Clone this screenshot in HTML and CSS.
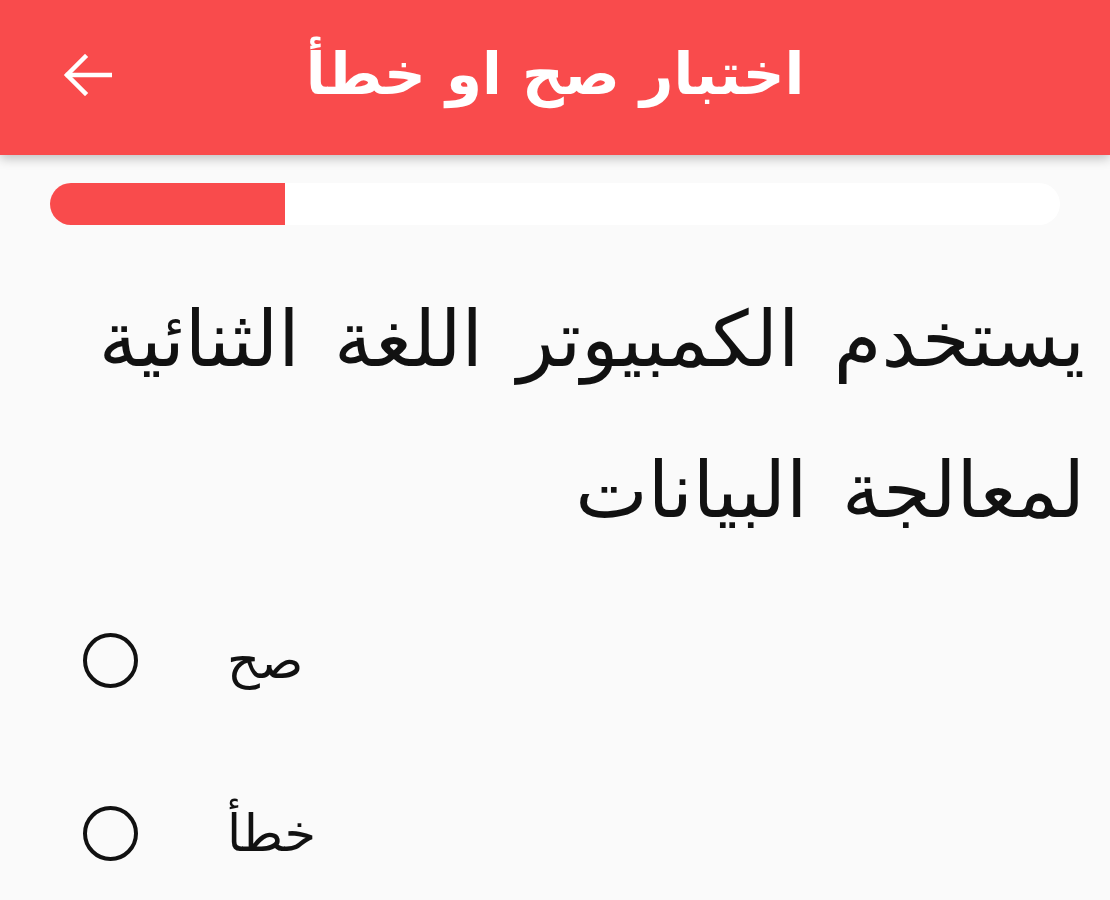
FILE: index.html
```html
<!DOCTYPE html>
<html lang="ar">
<head>
<meta charset="utf-8">
<link rel="stylesheet" href="styles.css">
</head>
<body>
<header class="appbar">
  <svg class="back" width="50" height="42" viewBox="0 0 50 42" fill="none" stroke="#fff" stroke-width="4.5" stroke-linecap="square">
    <path d="M48 21H6"/>
    <path d="M23 3L5 21l18 18"/>
  </svg>
  <h1 class="title">اختبار صح او خطأ</h1>
  <div class="spacer"></div>
</header>
<main class="content">
  <div class="progress"><div class="fill" style="width:23.3%"></div></div>
  <p class="question">يستخدم الكمبيوتر اللغة الثنائية<br>لمعالجة البيانات</p>
  <ul class="options">
    <li class="option"><span class="radio"></span><span class="label">صح</span></li>
    <li class="option"><span class="radio"></span><span class="label">خطأ</span></li>
  </ul>
</main>
</body>
</html>
```
FILE: styles.css
```css
html, body {
  margin: 0;
  padding: 0;
  background: #fafafa;
  font-family: "DejaVu Sans", sans-serif;
}
.appbar {
  height: 155px;
  background: #f94b4c;
  display: flex;
  align-items: center;
  padding: 0 62px;
  box-shadow: 0 4px 10px rgba(0,0,0,0.22);
  position: relative;
  z-index: 1;
}
.back { width: 50px; flex: none; margin-top: -6px; }
.spacer { width: 50px; flex: none; }
.title {
  flex: 1;
  margin: -8px 0 0;
  text-align: center;
  color: #fff;
  font-size: 58px;
  font-weight: bold;
  direction: rtl;
}
.content { padding: 28px 0 0; }
.progress {
  margin: 0 50px;
  height: 42px;
  border-radius: 21px;
  background: #fff;
  overflow: hidden;
}
.fill { height: 100%; background: #f94b4c; }
.question {
  direction: rtl;
  text-align: right;
  margin: 39px 25px 0 30px;
  font-size: 77px;
  line-height: 151px;
  word-spacing: 10px;
  color: #111;
}
.options {
  list-style: none;
  margin: 8px 0 0;
  padding: 0 0 0 83px;
}
.option {
  display: flex;
  align-items: center;
  height: 173px;
}
.radio {
  width: 47px;
  height: 47px;
  border: 4px solid #111;
  border-radius: 50%;
  flex: none;
}
.label {
  margin-left: 89px;
  font-size: 51px;
  color: #111;
}
```
